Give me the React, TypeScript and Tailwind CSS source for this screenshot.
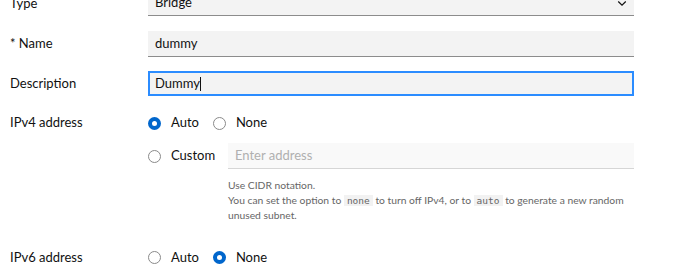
import React from 'react';

const font = { fontFamily: 'Lato, "Noto Sans", sans-serif' };
const mono = { fontFamily: '"DejaVu Sans Mono", "Liberation Mono", monospace' };

const Radio: React.FC<{ checked?: boolean; label: string }> = ({ checked, label }) => (
  <label className="flex items-center gap-[10px] text-[13px] text-[#111]">
    {checked ? (
      <span className="w-[13px] h-[13px] rounded-full bg-[#0066cc] flex items-center justify-center">
        <span className="w-[5px] h-[5px] rounded-full bg-white" />
      </span>
    ) : (
      <span className="w-[13px] h-[13px] rounded-full border border-[#8a8a8a] bg-white" />
    )}
    <span>{label}</span>
  </label>
);

const Row: React.FC<{ label: string; children: React.ReactNode; className?: string }> = ({ label, children, className }) => (
  <div className={`flex ${className ?? ''}`}>
    <div className="w-[148px] shrink-0 pl-[10px] text-[13px] text-[#111] leading-[24px]">{label}</div>
    <div className="w-[486px]">{children}</div>
  </div>
);

export default function App() {
  return (
    <div className="w-[690px] h-[270px] overflow-hidden bg-white" style={font}>
      <div className="-mt-[9px]">
        <Row label="Type">
          <div className="h-[25px] bg-[#f3f3f3] border-b border-[#8c8c8c] flex items-center justify-between pl-[7px] pr-[6px] text-[13px] text-[#111]">
            <span>Bridge</span>
            <svg width="12" height="12" viewBox="0 0 16 16" fill="none" stroke="#111" strokeWidth="1.6">
              <path d="M3 6l5 5 5-5" />
            </svg>
          </div>
        </Row>

        <Row label="* Name" className="mt-[15px]">
          <div className="h-[26px] bg-[#f3f3f3] border-b border-[#8c8c8c] flex items-center pl-[7px] text-[13px] text-[#111]">
            dummy
          </div>
        </Row>

        <Row label="Description" className="mt-[14px]">
          <div className="h-[25px] bg-[#f3f3f3] border-2 border-[#2b8cff] flex items-center pl-[5px] text-[13px] text-[#111]">
            Dummy<span className="w-px h-[14px] bg-[#111]" />
          </div>
        </Row>

        <Row label="IPv4 address" className="mt-[14px]">
          <div className="h-[26px] flex items-center gap-[14px]">
            <Radio checked label="Auto" />
            <Radio label="None" />
          </div>
          <div className="flex items-center mt-[7px]">
            <div className="w-[80px] h-[26px] flex items-center">
              <Radio label="Custom" />
            </div>
            <div className="flex-1 h-[26px] bg-[#f9f9f9] border-b border-[#d6d6d6] flex items-center pl-[7px] text-[13px] text-[#b0b0b0]">
              Enter address
            </div>
          </div>
          <div className="ml-[80px] mt-[9px] text-[10.3px] leading-[14.5px] text-[#666]">
            <div>Use CIDR notation.</div>
            <div className="whitespace-nowrap">
              You can set the option to{' '}
              <code className="bg-[#f2f2f2] px-[3px] text-[9.5px] text-[#666]" style={mono}>none</code>{' '}
              to turn off IPv4, or to{' '}
              <code className="bg-[#f2f2f2] px-[3px] text-[9.5px] text-[#666]" style={mono}>auto</code>{' '}
              to generate a new random
            </div>
            <div>unused subnet.</div>
          </div>
        </Row>

        <Row label="IPv6 address" className="mt-[22px]">
          <div className="h-[26px] flex items-center gap-[14px]">
            <Radio label="Auto" />
            <Radio checked label="None" />
          </div>
        </Row>
      </div>
    </div>
  );
}
